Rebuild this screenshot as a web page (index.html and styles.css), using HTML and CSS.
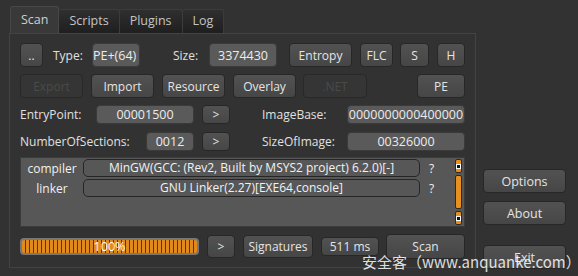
FILE: index.html
```html
<!DOCTYPE html>
<html lang="en">
<head>
    <meta charset="UTF-8">
    <title>Detect It Easy</title>
    <link rel="stylesheet" href="styles.css">
</head>
<body>
    <div class="window">
        <div class="main">
            <div class="tabs">
                <div class="tab active">Scan</div>
                <div class="tab">Scripts</div>
                <div class="tab">Plugins</div>
                <div class="tab">Log</div>
            </div>
            <div class="panel">
                <div class="row row-top">
                    <button class="btn w-dots">..</button>
                    <span class="label l-type">Type:</span>
                    <div class="field w-type"><span class="clip">PE+(64)</span></div>
                    <span class="label l-size">Size:</span>
                    <div class="field w-size">3374430</div>
                    <button class="btn w-entropy">Entropy</button>
                    <button class="btn w-flc">FLC</button>
                    <button class="btn w-s">S</button>
                    <button class="btn w-h">H</button>
                </div>
                <div class="row row-second">
                    <button class="btn disabled w-63">Export</button>
                    <button class="btn w-63">Import</button>
                    <button class="btn w-63">Resource</button>
                    <button class="btn w-63">Overlay</button>
                    <button class="btn disabled w-64">.NET</button>
                    <button class="btn w-pe">PE</button>
                </div>
                <div class="row row-info">
                    <span class="label l-left">EntryPoint:</span>
                    <div class="field small w-ep">00001500</div>
                    <button class="btn small w-go">&gt;</button>
                    <span class="label l-right">ImageBase:</span>
                    <div class="field small w-right">0000000000400000</div>
                </div>
                <div class="row row-info">
                    <span class="label l-left">NumberOfSections:</span>
                    <div class="field small w-sec">0012</div>
                    <button class="btn small w-go">&gt;</button>
                    <span class="label l-right">SizeOfImage:</span>
                    <div class="field small w-right">00326000</div>
                </div>
                <div class="results">
                    <div class="result-list">
                        <div class="result">
                            <span class="r-name">compiler</span>
                            <div class="r-value">MinGW(GCC: (Rev2, Built by MSYS2 project) 6.2.0)[-]</div>
                            <span class="r-help">?</span>
                        </div>
                        <div class="result">
                            <span class="r-name">linker</span>
                            <div class="r-value">GNU Linker(2.27)[EXE64,console]</div>
                            <span class="r-help">?</span>
                        </div>
                    </div>
                    <div class="scrollbar">
                        <div class="sb-arrow"><span></span></div>
                        <div class="sb-handle"></div>
                        <div class="sb-arrow"><span></span></div>
                    </div>
                </div>
                <div class="row row-bottom">
                    <div class="progress"><span>100%</span></div>
                    <button class="btn w-go tall">&gt;</button>
                    <button class="btn w-sig tall">Signatures</button>
                    <div class="btn w-time">511 ms</div>
                    <button class="btn w-scan">Scan</button>
                </div>
            </div>
        </div>
        <div class="side">
            <button class="btn side-btn">Options</button>
            <button class="btn side-btn">About</button>
            <button class="btn side-btn exit">Exit</button>
        </div>
    </div>
    <div class="watermark">安全客（www.anquanke.com）</div>
</body>
</html>
```

FILE: styles.css
```css
* {
    margin: 0;
    padding: 0;
    box-sizing: border-box;
}
body {
    width: 578px;
    height: 276px;
    overflow: hidden;
    background: #323232;
    font-family: "Open Sans", "Noto Sans", sans-serif;
    font-size: 12px;
    color: #dedede;
    position: relative;
}
.window {
    display: flex;
    padding: 6px 0 0 9px;
}
.main {
    width: 467px;
}
.side {
    display: flex;
    flex-direction: column;
    margin-left: 7px;
    padding-top: 163px;
}

/* tabs */
.tabs {
    display: flex;
    height: 27px;
    margin-left: 1px;
    align-items: flex-end;
}
.tab {
    height: 24px;
    padding: 0 10px;
    line-height: 22px;
    color: #c4c4c4;
    font-size: 12.5px;
    background: linear-gradient(#2f2f2f, #1f1f1f);
    border: 1px solid #3c3c3c;
    border-bottom: none;
    border-left: none;
    border-radius: 3px 3px 0 0;
}
.tab.active {
    height: 27px;
    line-height: 26px;
    background: #393939;
    border: 1px solid #474747;
    border-bottom: none;
    color: #cfcfcf;
}

/* panel */
.panel {
    height: 235px;
    border: 1px solid #434343;
    padding: 9px 10px 0 10px;
}
.row {
    display: flex;
    align-items: center;
}
.row-top {
    height: 24px;
}
.row-second {
    height: 24px;
    margin-top: 7px;
    gap: 8px;
}
.row-info {
    height: 19px;
    margin-top: 8px;
}
.row-info:nth-of-type(3) {
    margin-top: 7px;
}
.row-bottom {
    height: 24px;
    margin-top: 7px;
}

.btn {
    display: flex;
    align-items: center;
    justify-content: center;
    height: 24px;
    font-family: inherit;
    font-size: 12px;
    color: #e4e4e4;
    background: linear-gradient(#525252, #464646);
    border: 1px solid #272727;
    border-radius: 4px;
    flex-shrink: 0;
}
.btn.small {
    height: 19px;
}
.btn.disabled {
    color: #4a4a4a;
    background: #353535;
    border-color: #282828;
}
.field {
    height: 24px;
    display: flex;
    align-items: center;
    justify-content: center;
    background: #5a5a5a;
    border: 1px solid #3a3a3a;
    border-radius: 4px;
    color: #ececec;
    font-size: 12.5px;
    flex-shrink: 0;
    overflow: hidden;
}
.field.small {
    height: 19px;
}
.clip {
    display: block;
    width: 100%;
    text-align: right;
    padding-right: 3px;
    white-space: nowrap;
}
.label {
    color: #e0e0e0;
    white-space: nowrap;
}

.w-dots { width: 23px; }
.l-type { margin-left: 10px; width: 39px; }
.w-type { width: 48px; }
.l-size { margin-left: 33px; width: 36px; }
.w-size { width: 68px; }
.w-entropy { width: 63px; margin-left: 12px; }
.w-flc { width: 33px; margin-left: 8px; }
.w-s { width: 29px; margin-left: 7px; }
.w-h { width: 28px; margin-left: 8px; }

.w-63 { width: 63px; }
.w-64 { width: 64px; margin-left: -1px; }
.w-pe { width: 48px; margin-left: auto; }

.l-left { width: 76px; }
.w-ep { width: 98px; }
.row-info .l-left + .w-sec { width: 48px; margin-left: 50px; }
.w-go { width: 28px; margin-left: 8px; }
.l-right { margin-left: 32px; width: 85px; }
.w-right { width: 118px; }

/* results */
.results {
    height: 70px;
    margin-top: 6px;
    background: #575757;
    border: 1px solid #3c3c3c;
    display: flex;
    padding: 1px 1px 1px 0;
}
.result-list {
    flex: 1;
    display: flex;
    flex-direction: column;
    gap: 2px;
}
.result {
    display: flex;
    align-items: center;
    height: 18px;
}
.r-name {
    width: 62px;
    text-align: center;
    color: #f0f0f0;
}
.r-value {
    width: 337px;
    height: 18px;
    line-height: 16px;
    border: 1px solid #262626;
    border-radius: 5px;
    text-align: center;
    color: #f2f2f2;
    white-space: nowrap;
    overflow: hidden;
}
.r-help {
    margin-left: 9px;
    color: #f0f0f0;
}
.scrollbar {
    width: 7px;
    margin-right: 1px;
    display: flex;
    flex-direction: column;
    gap: 2px;
}
.sb-arrow {
    height: 14px;
    background: #e8901e;
    border: 1px solid #2a2a2a;
    border-radius: 2px;
    display: flex;
    align-items: center;
    justify-content: center;
}
.sb-arrow span {
    width: 3px;
    height: 3px;
    background: #111;
    box-shadow: 0 0 0 1px #fff;
}
.sb-handle {
    flex: 1;
    background: #e8901e;
    border: 1px solid #2a2a2a;
    border-radius: 2px;
}

/* bottom row */
.progress {
    width: 179px;
    height: 17px;
    border: 2px solid #777;
    border-radius: 4px;
    background: repeating-linear-gradient(90deg, #e08a1e 0 3px, #3c3c3c 3px 4px);
    display: flex;
    align-items: center;
    justify-content: center;
    color: #fff;
    font-size: 12.5px;
}
.tall { height: 23px; }
.w-sig { width: 70px; margin-left: 8px; }
.w-time { width: 58px; height: 19px; margin-left: 8px; }
.w-scan { width: 79px; margin-left: 7px; margin-top: 1px; height: 25px; align-items: flex-start; padding-top: 3px; }

/* side */
.side-btn {
    width: 83px;
    height: 24px;
    font-size: 12.5px;
    margin-bottom: 8px;
}
.side-btn.exit {
    margin-top: 12px;
}

.watermark {
    position: absolute;
    left: 362px;
    top: 251px;
    font-family: "Noto Sans CJK SC", "Noto Sans", sans-serif;
    font-size: 15px;
    color: rgba(255, 255, 255, 0.85);
    white-space: nowrap;
}
```
